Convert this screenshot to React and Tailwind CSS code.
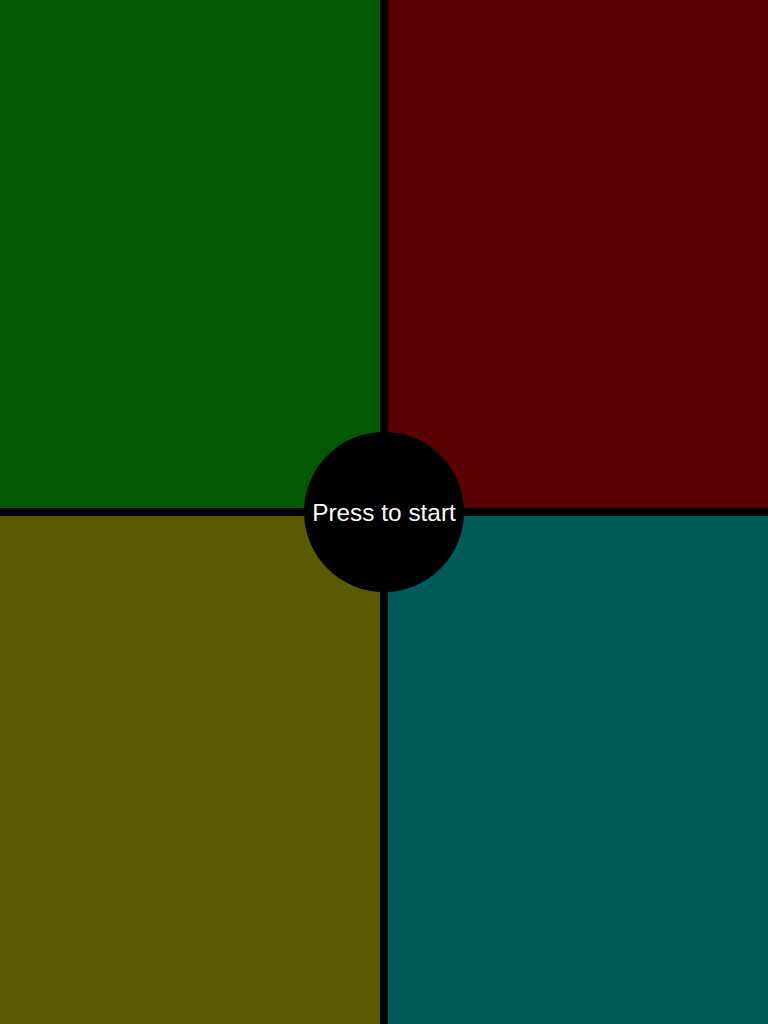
import React from 'react';

const pads = [
  { id: 'green', className: 'bg-[#015801]' },
  { id: 'red', className: 'bg-[#5b0001]' },
  { id: 'yellow', className: 'bg-[#5b5901]' },
  { id: 'blue', className: 'bg-[#015b5b]' },
];

export default function App() {
  return (
    <div className="relative h-[1024px] w-[768px] overflow-hidden bg-black">
      <div className="grid h-full w-full grid-cols-2 grid-rows-2 gap-2">
        {pads.map(pad => (
          <button key={pad.id} type="button" className={pad.className} />
        ))}
      </div>

      {/* start button */}
      <button
        type="button"
        className="absolute left-[304px] top-[432px] flex h-[160px] w-[160px] items-center justify-center rounded-full bg-black pt-[2px] text-[24.4px] text-white"
        style={{ fontFamily: '"Liberation Sans", Arial, sans-serif' }}
      >
        Press to start
      </button>
    </div>
  );
}
